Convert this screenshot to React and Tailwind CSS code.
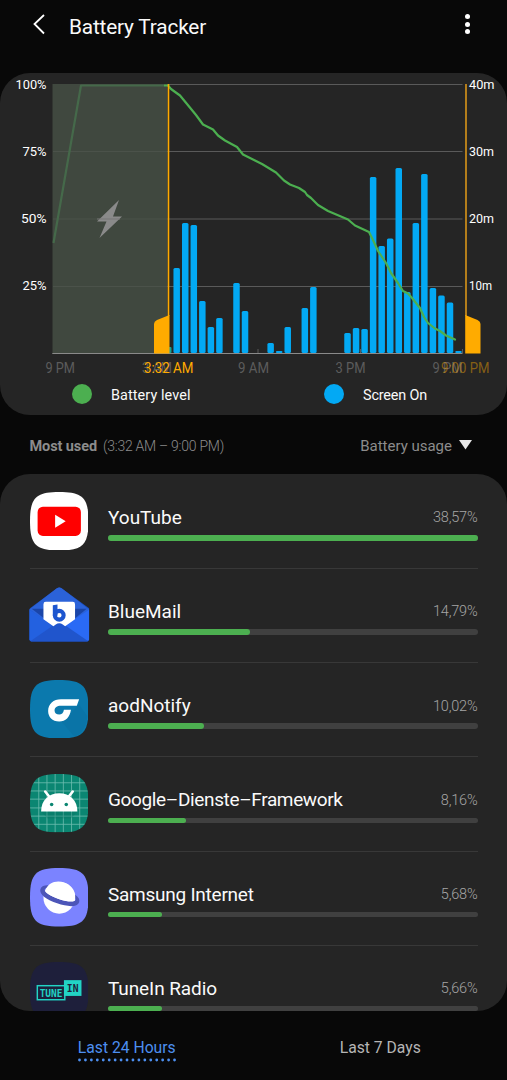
import React, { useState } from "react";

const SQUIRCLE = "M50 0C90 0 100 10 100 50S90 100 50 100 0 90 0 50 10 0 50 0Z";

const YouTubeIcon = () => (
  <svg viewBox="0 0 100 100" className="w-full h-full">
    <path d={SQUIRCLE} fill="#ffffff" />
    <rect x="13" y="25" width="74" height="50" rx="9" fill="#ff0000" />
    <path d="M43 39L61 50L43 61Z" fill="#ffffff" />
  </svg>
);

const BlueMailIcon = () => (
  <svg viewBox="0 0 100 100" className="w-full h-full overflow-visible">
    <path d="M0 38L46 4Q50 1 54 4L101 38V91Q101 95 96 95H4Q-1 95 -1 91V40Z" fill="#1a4fc0" />
    <path d="M-1 40L46 4Q50 1 54 4L101 40L78 57H22Z" fill="#2b62d8" />
    <path d="M3 39H25V56Z" fill="#1a45a8" />
    <path d="M97 39H76V56Z" fill="#1a45a8" />
    <path d="M-1 40L44 70L3 94Q-1 94 -1 91Z" fill="#2361e0" />
    <path d="M101 40L56 70L97 94Q101 94 101 91Z" fill="#2a6af5" />
    <path d="M1 94L42 66Q50 61 58 66L99 94Q98 95 96 95H4Q2 95 1 94Z" fill="#2055cc" />
    <path d="M27 27H73Q77 27 77 31V57L60 69L56 66Q50 61 44 66L40 69L23 57V31Q23 27 27 27Z" fill="#ffffff" />
    {/* logo mark: stem plus round bowl */}
    <path d="M39 33L47 31.500V51H39Z" fill="#1d56cf" />
    <circle cx="50" cy="50" r="7.500" fill="none" stroke="#1d56cf" strokeWidth="7" />
  </svg>
);

const AodNotifyIcon = () => (
  <svg viewBox="0 0 100 100" className="w-full h-full">
    <path d={SQUIRCLE} fill="#0b79ad" />
    <path d="M61 66L84 42L98 62Q95 90 76 97L52 69Z" fill="#0a6d9e" opacity="0.4" />
    <path
      d="M84 33L80 44H53C46 44 42 47 42 52C42 56 45 59 50 59C54 59 57 57 58 51H70C68 64 61 71 50 71C38 71 31 63 31 53C31 41 40 33 53 33Z"
      fill="#ffffff"
    />
  </svg>
);

const AndroidIcon = () => (
  <svg viewBox="0 0 100 100" className="w-full h-full">
    <defs>
      <clipPath id="android-clip">
        <path d={SQUIRCLE} />
      </clipPath>
    </defs>
    <g clipPath="url(#android-clip)">
      <rect width="100" height="100" fill="#0b8672" />
      <path
        d="M15 0V100M29 0V100M43 0V100M57 0V100M71 0V100M85 0V100M0 15H100M0 29H100M0 43H100M0 58H100M0 72H100M0 86H100"
        stroke="#6cbcae"
        strokeWidth="1.4"
      />
      <path d="M19 64H81L70 76H30Z" fill="#057361" opacity="0.35" />
      <path d="M26 30L33 39M73 30L66 39" stroke="#ffffff" strokeWidth="4.5" strokeLinecap="round" />
      <path d="M19 64C19 45 32 33 50 33S81 45 81 64Z" fill="#ffffff" />
      <circle cx="37" cy="52" r="3" fill="#0b8672" />
      <circle cx="62" cy="52" r="3" fill="#0b8672" />
    </g>
  </svg>
);

const InternetIcon = () => (
  <svg viewBox="0 0 100 100" className="w-full h-full">
    <path d={SQUIRCLE} fill="#7b83ff" />
    <circle cx="50" cy="51" r="27" fill="#ffffff" />
    <g transform="rotate(19 50 50)">
      <path
        fillRule="evenodd"
        d="M15 47C15 37 32 34 50 34S85 37 85 47C85 57 68 61 50 61S15 57 15 47ZM22 45C22 50 34 53 50 53S78 50 78 45C78 41 68 39 50 39S22 41 22 45Z"
        fill="#4c55b8"
      />
      {/* upper half of the planet sits in front of the ring */}
      <path d="M23.500 47C24 33 35 23.500 50 23.500S76 33 77 47C72 51 62 53 50 53S27 51 23.500 47Z" fill="#ffffff" />
    </g>
  </svg>
);

const TuneInIcon = () => (
  <svg viewBox="0 0 100 100" className="w-full h-full">
    <path d={SQUIRCLE} fill="#1e1f3b" />
    <rect x="12.5" y="40.5" width="47" height="24" fill="#1c203c" stroke="#22d3c5" strokeWidth="2.5" />
    <rect x="58" y="31" width="30" height="27" fill="#22d3c5" />
    <text
      x="36"
      y="59.5"
      textAnchor="middle"
      textLength="39"
      lengthAdjust="spacingAndGlyphs"
      fontFamily="'DejaVu Sans Mono', monospace"
      fontWeight="700"
      fontSize="19"
      fill="#22d3c5"
    >
      TUNE
    </text>
    <text
      x="73"
      y="51.5"
      textAnchor="middle"
      textLength="20"
      lengthAdjust="spacingAndGlyphs"
      fontFamily="'DejaVu Sans Mono', monospace"
      fontWeight="700"
      fontSize="19"
      fill="#1e1f3b"
    >
      IN
    </text>
  </svg>
);

const apps = [
  { name: "YouTube", usage: 38.57, Icon: YouTubeIcon, tracking: "tracking-normal" },
  { name: "BlueMail", usage: 14.79, Icon: BlueMailIcon, tracking: "tracking-normal" },
  { name: "aodNotify", usage: 10.02, Icon: AodNotifyIcon, tracking: "tracking-normal" },
  { name: "Google–Dienste–Framework", usage: 8.16, Icon: AndroidIcon, tracking: "tracking-[-0.36px]" },
  { name: "Samsung Internet", usage: 5.68, Icon: InternetIcon, tracking: "tracking-[-0.25px]" },
  { name: "TuneIn Radio", usage: 5.66, Icon: TuneInIcon, tracking: "tracking-[-0.1px]" },
];

// [half hour slot since 9 PM, bar height]
const screenOn = [
  [14, 85], [15, 130], [16, 128], [17, 52], [18, 26], [19, 35],
  [21, 70], [22, 42], [25, 10], [26, 2], [27, 26], [29, 45], [30, 66],
  [34, 20], [35, 25], [36, 24], [37, 176], [38, 107], [39, 114.5],
  [40, 185], [41, 61], [42, 130], [43, 179], [44, 65], [45, 57.5],
  [46, 50.5], [47, 2],
];

const leftAxis = [
  ["100%", 15.5, 31],
  ["75%", 82.5, 24],
  ["50%", 150, 25.5],
  ["25%", 217, 24],
];

const rightAxis = [
  ["40m", 15.5, 25.5],
  ["30m", 82.5, 25],
  ["20m", 150, 25],
  ["10m", 217, 23],
];

const timeAxis = [
  ["9 PM", 45.5, 29.5],
  ["3 AM", 142, 30],
  ["9 AM", 238, 31],
  ["3 PM", 335.5, 30],
  ["9 PM", 432.5, 30],
];

const UsageChart = () => (
  <svg viewBox="0 0 507 307" className="block w-full h-[307px]" fontFamily="Roboto, sans-serif">
    <g stroke="#5a5a5a" strokeWidth="1">
      <path d="M53 11.5H462.5M53 78.5H462.5M53 146H462.5M53 213.5H462.5" />
      <path d="M258 276V280M360.500 276V280M462.500 276V280" />
    </g>

    {screenOn.map(([slot, height]) => (
      <rect
        key={slot}
        x={53.9 + slot * 8.54}
        y={280 - height}
        width="6.5"
        height={height}
        rx={Math.min(1.5, height / 2)}
        fill="#03a9f4"
      />
    ))}
    <rect x="168" y="274" width="3.500" height="6" rx="1" fill="#18a294" />
    <path d="M52.500 280.500H462.500" stroke="#8a8a8a" strokeWidth="1.2" />

    <path
      d="M163 12.500H168L171 16L180 22.500L187 31L196 42L203 51.500L213 56.500L218 62.500L225 67.500L237 74L243 81.500L253 86.500L262 91L276 99.500L284 107.500L290 111.500L299 115L305 119L307 122L311 125L318 132L328 138L348 146.500L355 152.500L369 159L373 167L378 178L386 190L391 200L398 210L403 218L408 220.500L412 225L420 235L424 244L428 250L435 255.500L440 258L446 262.500L455 266.500"
      fill="none"
      stroke="#4caf50"
      strokeWidth="2.200"
      strokeLinejoin="round"
      strokeLinecap="round"
    />

    {/* charging period before the selected range */}
    <rect x="52.500" y="11" width="115" height="269.500" fill="#40483f" />
    <path d="M53 78.500H167M53 146H167M53 213.500H167" stroke="#4b524a" strokeWidth="1" />
    <path d="M53.500 170L81 12.500H164" fill="none" stroke="#45694a" strokeWidth="2.200" strokeLinejoin="round" />
    <path d="M164 12.500H168" stroke="#4caf50" strokeWidth="2" />
    <path d="M119 127L97 148.500H106.500L99.500 165L122 143.500H113Z" fill="#8a8a8a" />
    <path d="M97 146H120" stroke="#767676" strokeWidth="1" />
    <path d="M52.500 280.500H168" stroke="#8a8a8a" strokeWidth="1.2" />

    <g fill="#ffffff" fontSize="13.5">
      {leftAxis.map(([label, y, width]) => (
        <text key={label} x={46.5 - width} y={y} textLength={width} lengthAdjust="spacingAndGlyphs">
          {label}
        </text>
      ))}
      {rightAxis.map(([label, y, width]) => (
        <text key={label} x="469" y={y} textLength={width} lengthAdjust="spacingAndGlyphs">
          {label}
        </text>
      ))}
    </g>

    <g fill="#5c5c5c" fontSize="14">
      {timeAxis.map(([label, x, width]) => (
        <text key={x} x={x} y="299.5" textLength={width} lengthAdjust="spacingAndGlyphs">
          {label}
        </text>
      ))}
    </g>

    {/* range handles */}
    <path d="M168.500 11V243" stroke="#ffab00" strokeWidth="1.600" />
    <path d="M169.500 242V280.500H154V251Q154 248.500 157 247Z" fill="#ffab00" />
    <path d="M466 11V243" stroke="#d9951a" strokeWidth="1.600" />
    <path d="M465.200 242V280.500H480.500V251Q480.500 248.500 477.500 247Z" fill="#ffab00" />
    <text x="144" y="299.5" fill="#ffab00" fontSize="14" textLength="49.500" lengthAdjust="spacingAndGlyphs">
      3:32 AM
    </text>
    <text x="441" y="299.5" fill="#ffab00" fillOpacity="0.45" fontSize="14" textLength="48.500" lengthAdjust="spacingAndGlyphs">
      9:00 PM
    </text>
  </svg>
);

const AppRow = ({ app, last }) => {
  const { name, usage, Icon, tracking } = app;
  const share = (usage / apps[0].usage) * 100;

  return (
    <div className="mx-[29.5px] h-[94.2px] shrink-0">
      <div className="flex h-[94px]">
        <div className="w-[58.5px] h-[58.5px] mt-[17.5px] shrink-0">
          <Icon />
        </div>
        <div className="ml-5 flex-1 pt-[32px]">
          <div className="flex items-center justify-between h-6">
            <span className={`text-[19px] text-[#fafafa] ${tracking}`}>{name}</span>
            <span className="text-[14.5px] font-light tracking-[-0.2px] text-[#a5a5a5]">
              {usage.toFixed(2).replace(".", ",")}%
            </span>
          </div>
          <div className="mt-[5px] h-[5.5px] rounded-full bg-[#404040]">
            <div className="h-full rounded-full bg-[#4caf50]" style={{ width: `${share}%` }} />
          </div>
        </div>
      </div>
      {!last && <div className="h-px bg-[#383838]" />}
    </div>
  );
};

const App = () => {
  const [tab, setTab] = useState("day");

  return (
    <div className="w-[507px] h-[1080px] overflow-hidden flex flex-col bg-[#080808] font-['Roboto',sans-serif]">
      <header className="h-[73px] shrink-0 flex items-start pl-8 pr-8">
        <svg viewBox="0 0 14 22" className="w-[14px] h-[22px] mt-[13px]" fill="none" stroke="#fff" strokeWidth="1.8">
          <path d="M12 2L2.500 11L12 20.500" />
        </svg>
        <h1 className="ml-[23px] mt-[11.5px] text-[20.8px] tracking-[-0.17px] leading-[30px] text-[#fafafa]">Battery Tracker</h1>
        <div className="ml-auto mr-[5px] mt-[14px] flex flex-col gap-[2.5px]">
          <span className="w-[5px] h-[5px] rounded-full bg-white" />
          <span className="w-[5px] h-[5px] rounded-full bg-white" />
          <span className="w-[5px] h-[5px] rounded-full bg-white" />
        </div>
      </header>

      <section className="h-[342px] shrink-0 rounded-[30px] bg-[#252525] overflow-hidden">
        <UsageChart />
        <div className="flex items-center h-[29px] pl-[71.5px] text-[14.4px] text-[#fafafa]">
          <div className="flex items-center w-[252px]">
            <span className="w-5 h-5 rounded-full bg-[#4caf50]" />
            <span className="ml-[19.5px] pt-[3px] tracking-[0.1px]">Battery level</span>
          </div>
          <div className="flex items-center">
            <span className="w-5 h-5 rounded-full bg-[#03a9f4]" />
            <span className="ml-[19.5px] pt-[3px] tracking-[-0.15px]">Screen On</span>
          </div>
        </div>
      </section>

      <div className="h-[59px] shrink-0 flex items-center pl-[29.5px] pr-[35px] pt-[4px] text-[15px] text-[#8c8c8c]">
        <span className="font-bold text-[14.5px] tracking-[-0.1px]">Most used</span>
        <span className="ml-[6px] font-light text-[14px] tracking-[-0.26px]">(3:32 AM – 9:00 PM)</span>
        <span className="ml-auto">Battery usage</span>
        <svg viewBox="0 0 13 10" className="w-[13px] h-[10px] ml-[7px] -mt-1">
          <path d="M0 0H13L6.500 9.500Z" fill="#e8e8e8" />
        </svg>
      </div>

      <section className="h-[537px] shrink-0 flex flex-col rounded-[30px] bg-[#252525] overflow-hidden">
        {apps.map((app, index) => (
          <AppRow key={app.name} app={app} last={index === apps.length - 1} />
        ))}
      </section>

      <nav className="flex-1 grid grid-cols-2 justify-items-center items-start pt-[24.5px] text-[15.7px]">
        <button
          onClick={() => setTab("day")}
          className={tab === "day" ? "flex flex-col text-[#4d8ff0]" : "flex flex-col text-[#b5b5b5]"}
        >
          Last 24 Hours
          {tab === "day" && (
            <svg viewBox="0 0 98 4" className="w-[98px] h-1 -mt-px">
              <path d="M1.500 2H97" stroke="#4d8ff0" strokeWidth="2.800" strokeLinecap="round" strokeDasharray="0 5.940" />
            </svg>
          )}
        </button>
        <button
          onClick={() => setTab("week")}
          className={tab === "week" ? "text-[#4d8ff0]" : "text-[#b5b5b5]"}
        >
          Last 7 Days
        </button>
      </nav>
    </div>
  );
};

export default App;
